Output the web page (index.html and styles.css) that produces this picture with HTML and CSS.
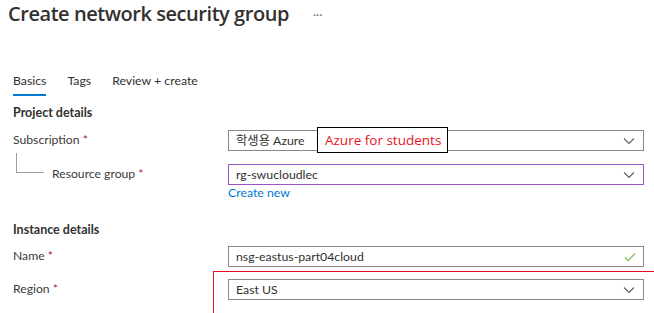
FILE: index.html
```html
<!doctype html>
<html lang="ko">
	<head>
		<meta charset="UTF-8" />
		<meta name="viewport" content="width=device-width, initial-scale=1.0" />
		<title>Create network security group</title>
		<link rel="stylesheet" href="styles.css">
	</head>
	<body>
		<div class="page">
			<div class="title-bar">
				<h1>Create network security group</h1>
				<span class="more">···</span>
			</div>

			<div class="tabs">
				<span class="tab active">Basics</span>
				<span class="tab">Tags</span>
				<span class="tab">Review + create</span>
			</div>

			<h2 class="section-title">Project details</h2>

			<div class="form-row">
				<label class="field-label">Subscription <span class="req">*</span></label>
				<div class="field">
					<div class="select">
						<span class="value">학생용 Azure</span>
						<svg class="chevron" width="12" height="8" viewBox="0 0 12 8"><path d="M1 1.5l5 5 5-5" fill="none" stroke="#605e5c" stroke-width="1.1" /></svg>
					</div>
				</div>
			</div>

			<div class="form-row nested">
				<label class="field-label child">Resource group <span class="req">*</span></label>
				<div class="field">
					<div class="select focused">
						<span class="value">rg-swucloudlec</span>
						<svg class="chevron" width="12" height="8" viewBox="0 0 12 8"><path d="M1 1.5l5 5 5-5" fill="none" stroke="#605e5c" stroke-width="1.1" /></svg>
					</div>
					<a class="link" href="#">Create new</a>
				</div>
			</div>

			<h2 class="section-title instance">Instance details</h2>

			<div class="form-row">
				<label class="field-label">Name <span class="req">*</span></label>
				<div class="field">
					<div class="select">
						<span class="value">nsg-eastus-part04cloud</span>
						<svg class="check" width="12" height="10" viewBox="0 0 12 10"><path d="M1 5.5l3.2 3.2L11 1.5" fill="none" stroke="#7fba4a" stroke-width="1.2" /></svg>
					</div>
				</div>
			</div>

			<div class="form-row region">
				<label class="field-label">Region <span class="req">*</span></label>
				<div class="field">
					<div class="select">
						<span class="value">East US</span>
						<svg class="chevron" width="12" height="8" viewBox="0 0 12 8"><path d="M1 1.5l5 5 5-5" fill="none" stroke="#605e5c" stroke-width="1.1" /></svg>
					</div>
				</div>
			</div>

			<!-- 주석 표시 (스크린샷 위에 덧그린 부분) -->
			<div class="note">Azure for students</div>
			<div class="highlight"></div>
		</div>
	</body>
</html>
```

FILE: styles.css
```css
:root {
	--text-color: #323130;
	--label-color: #3b3a39;
	--border-color: #8a8886;
	--focus-color: #9b52c2;
	--link-color: #0078d4;
	--required-color: #a4262c;
	--mark-color: #e81123;
}

body {
	margin: 0;
	font-family: Lato, 'Noto Sans CJK KR', sans-serif;
	color: var(--text-color);
	background-color: #fff;
	overflow: hidden;
}

.page {
	position: relative;
	width: 654px;
	height: 313px;
	padding-left: 13px;
	box-sizing: border-box;
}

.title-bar {
	display: flex;
	align-items: center;
	margin-left: -5px;
	height: 28px;
}

h1 {
	margin: 0;
	font-family: 'Open Sans', sans-serif;
	font-size: 20px;
	font-weight: 600;
	line-height: 28px;
	letter-spacing: -0.45px;
}

.more {
	margin-left: 24px;
	font-size: 12px;
	color: #797775;
}

.tabs {
	display: flex;
	gap: 21px;
	margin-top: 45px;
}

.tab {
	font-size: 12.3px;
	line-height: 16px;
	padding-bottom: 5px;
	border-bottom: 2px solid transparent;
}

.tab.active {
	border-bottom-color: var(--link-color);
}

.section-title {
	margin: 8px 0 8px;
	font-size: 12.5px;
	font-weight: 700;
	line-height: 18px;
}

.section-title.instance {
	margin-top: 21px;
	margin-bottom: 7px;
}

.form-row {
	display: grid;
	grid-template-columns: 215px 416px;
	align-items: start;
}

.form-row.nested {
	margin-top: 13px;
}

.form-row.region {
	margin-top: 12px;
}

.field-label {
	font-size: 12.2px;
	line-height: 20px;
	color: var(--label-color);
}

.field-label.child {
	position: relative;
	padding-left: 39px;
}

/* 트리 연결선 */
.field-label.child::before {
	content: '';
	position: absolute;
	left: 3px;
	top: -11px;
	width: 27px;
	height: 19px;
	border-left: 1px solid #a19f9d;
	border-bottom: 1px solid #a19f9d;
}

.req {
	color: var(--required-color);
}

.select {
	display: flex;
	align-items: center;
	justify-content: space-between;
	height: 21px;
	padding: 0 7px 0 7px;
	border: 1px solid var(--border-color);
	box-sizing: border-box;
	font-size: 12.3px;
}

.select.focused {
	border-color: var(--focus-color);
}

.value {
	line-height: 19px;
}

.chevron {
	margin-right: 1px;
}

.link {
	display: block;
	font-size: 12.3px;
	line-height: 15px;
	color: var(--link-color);
	text-decoration: none;
}

.note {
	position: absolute;
	left: 317px;
	top: 127px;
	width: 131px;
	height: 26px;
	box-sizing: border-box;
	border: 1px solid #000;
	background-color: #fff;
	color: var(--mark-color);
	font-family: 'Open Sans', sans-serif;
	font-size: 13.5px;
	line-height: 24px;
	padding-left: 7px;
}

.highlight {
	position: absolute;
	left: 213px;
	top: 271px;
	right: 0;
	bottom: 0;
	border-left: 1px solid var(--mark-color);
	border-top: 1px solid var(--mark-color);
}
```
